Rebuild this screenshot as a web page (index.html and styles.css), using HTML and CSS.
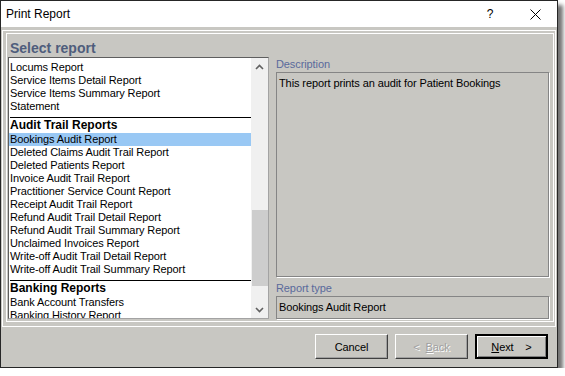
FILE: index.html
```html
<!DOCTYPE html>
<html>
  <head>
    <meta charset="utf-8" />
    <title>Print Report</title>
    <link rel="stylesheet" href="styles.css">
  </head>
  <body>
    <div class="window">
      <!-- title bar -->
      <div class="titlebar">
        <span class="title">Print Report</span>
        <span class="help">?</span>
        <span class="close">
          <svg width="11" height="11" viewBox="0 0 11 11">
            <path d="M0.5 0.5 L10.5 10.5 M10.5 0.5 L0.5 10.5" stroke="#000" stroke-width="1" fill="none" />
          </svg>
        </span>
      </div>

      <div class="dialogBody">
        <div class="frame">
          <div class="panel">
            <div class="panelTitle">Select report</div>
            <div class="panelRow">
              <!-- report list -->
              <div class="reportList">
                <div class="listItems">
                  <div class="item">Locums Report</div>
                  <div class="item">Service Items Detail Report</div>
                  <div class="item">Service Items Summary Report</div>
                  <div class="item">Statement</div>
                  <div class="group">
                    <div class="groupTitle">Audit Trail Reports</div>
                    <div class="item selected">Bookings Audit Report</div>
                    <div class="item">Deleted Claims Audit Trail Report</div>
                    <div class="item">Deleted Patients Report</div>
                    <div class="item">Invoice Audit Trail Report</div>
                    <div class="item">Practitioner Service Count Report</div>
                    <div class="item">Receipt Audit Trail Report</div>
                    <div class="item">Refund Audit Trail Detail Report</div>
                    <div class="item">Refund Audit Trail Summary Report</div>
                    <div class="item">Unclaimed Invoices Report</div>
                    <div class="item">Write-off Audit Trail Detail Report</div>
                    <div class="item">Write-off Audit Trail Summary Report</div>
                  </div>
                  <div class="group">
                    <div class="groupTitle">Banking Reports</div>
                    <div class="item">Bank Account Transfers</div>
                    <div class="item">Banking History Report</div>
                  </div>
                </div>
                <div class="scrollbar">
                  <div class="scrollButton">
                    <svg width="9" height="6" viewBox="0 0 9 6">
                      <path d="M1 5 L4.5 1.5 L8 5" stroke="#606060" stroke-width="1.6" fill="none" />
                    </svg>
                  </div>
                  <div class="track"><div class="thumb"></div></div>
                  <div class="scrollButton">
                    <svg width="9" height="6" viewBox="0 0 9 6">
                      <path d="M1 1 L4.5 4.5 L8 1" stroke="#606060" stroke-width="1.6" fill="none" />
                    </svg>
                  </div>
                </div>
              </div>

              <!-- details of the chosen report -->
              <div class="details">
                <div class="fieldLabel">Description</div>
                <div class="fieldBox description">This report prints an audit for Patient Bookings</div>
                <div class="fieldLabel second">Report type</div>
                <div class="fieldBox reportType">Bookings Audit Report</div>
              </div>
            </div>
          </div>
        </div>

        <div class="buttons">
          <button class="btn">Cancel</button>
          <button class="btn" disabled>&lt;&nbsp;&nbsp;<u>B</u>ack</button>
          <button class="btn defaultBtn"><u>N</u>ext&nbsp;&nbsp;&nbsp;&nbsp;&gt;</button>
        </div>
      </div>
    </div>
  </body>
</html>
```

FILE: styles.css
```css
body {
  margin: 0;
  background: #fff;
  font-family: "Liberation Sans", Arial, sans-serif;
  font-size: 11px;
  letter-spacing: -0.1px;
  color: #000;
}

.window {
  width: 556px;
  height: 366px;
  border: 1px solid #262626;
  background: #c8c7c2;
  box-shadow: 5px 5px 4px rgba(0, 0, 0, 0.55);
  display: flex;
  flex-direction: column;
}

/* title bar */
.titlebar {
  height: 26px;
  background: #fff;
  display: flex;
  align-items: center;
  padding-left: 5px;
  padding-right: 12px;
  font-size: 12px;
  letter-spacing: 0;
}
.title {
  flex: 1;
}
.help {
  width: 20px;
  margin-right: 25px;
  text-align: center;
}
.close {
  width: 20px;
  height: 11px;
  display: flex;
  justify-content: center;
}

/* dialog body */
.dialogBody {
  flex: 1;
  padding: 3px 1px 8px 1px;
  display: flex;
  flex-direction: column;
}
.frame {
  border: 1px solid #fff;
}
.panel {
  margin: 2px 1px 4px 3px;
  border: 1px solid #fff;
  padding: 6px 4px 2px 1px;
}
.panelTitle {
  font-weight: bold;
  font-size: 14px;
  line-height: 17px;
  color: #4f5d7c;
  padding-left: 2px;
  letter-spacing: 0;
}
.panelRow {
  display: flex;
  gap: 7px;
  height: 262px;
}

/* list box */
.reportList {
  width: 261px;
  box-sizing: border-box;
  border: 1px solid;
  border-color: #5e5e5e #a3a3a3 #a3a3a3 #5e5e5e;
  background: #fff;
  display: flex;
}
.listItems {
  flex: 1;
  overflow: hidden;
  padding-top: 3px;
}
.item {
  height: 13px;
  line-height: 13px;
  padding-left: 1px;
  white-space: nowrap;
}
.item.selected {
  background: #99c8f4;
}
.group {
  margin-top: 4px;
  border-top: 1px solid #000;
  margin-left: 1px;
}
.group .item {
  margin-left: -1px;
}
.groupTitle {
  font-weight: bold;
  font-size: 12px;
  line-height: 15px;
  height: 15px;
  letter-spacing: 0;
}

.scrollbar {
  width: 17px;
  background: #f0f0f0;
  display: flex;
  flex-direction: column;
}
.scrollButton {
  height: 17px;
  display: flex;
  align-items: center;
  justify-content: center;
}
.track {
  flex: 1;
}
.thumb {
  margin-top: 135px;
  margin-left: 1px;
  height: 76px;
  background: #cdcdcd;
}

/* right column */
.details {
  width: 273px;
  display: flex;
  flex-direction: column;
}
.fieldLabel {
  color: #5a6a9c;
  line-height: 15px;
}
.fieldLabel.second {
  margin-top: 3px;
  line-height: 16px;
}
.fieldBox {
  box-sizing: border-box;
  border: 1px solid #858585;
  box-shadow: 1px 1px 0 #fff;
  padding: 3px 2px 0 2px;
  line-height: 14px;
}
.description {
  height: 205px;
}
.reportType {
  height: 23px;
}

/* buttons */
.buttons {
  display: flex;
  justify-content: flex-end;
  gap: 7px;
  margin-top: 7px;
  padding-right: 8px;
}
.btn {
  width: 73px;
  height: 25px;
  box-sizing: border-box;
  padding: 0;
  font-family: inherit;
  font-size: 11px;
  letter-spacing: -0.1px;
  color: #000;
  background: #c8c7c2;
  border: 1px solid;
  border-color: #fff #404040 #404040 #fff;
  box-shadow: inset -1px -1px 0 #a0a0a0;
}
.btn:disabled {
  color: #a0a0a0;
  text-shadow: 1px 1px 0 #fff;
}
.btn.defaultBtn {
  border: 2px solid #000;
  box-shadow: inset 1px 1px 0 #fff, inset -1px -1px 0 #808080;
}
```
